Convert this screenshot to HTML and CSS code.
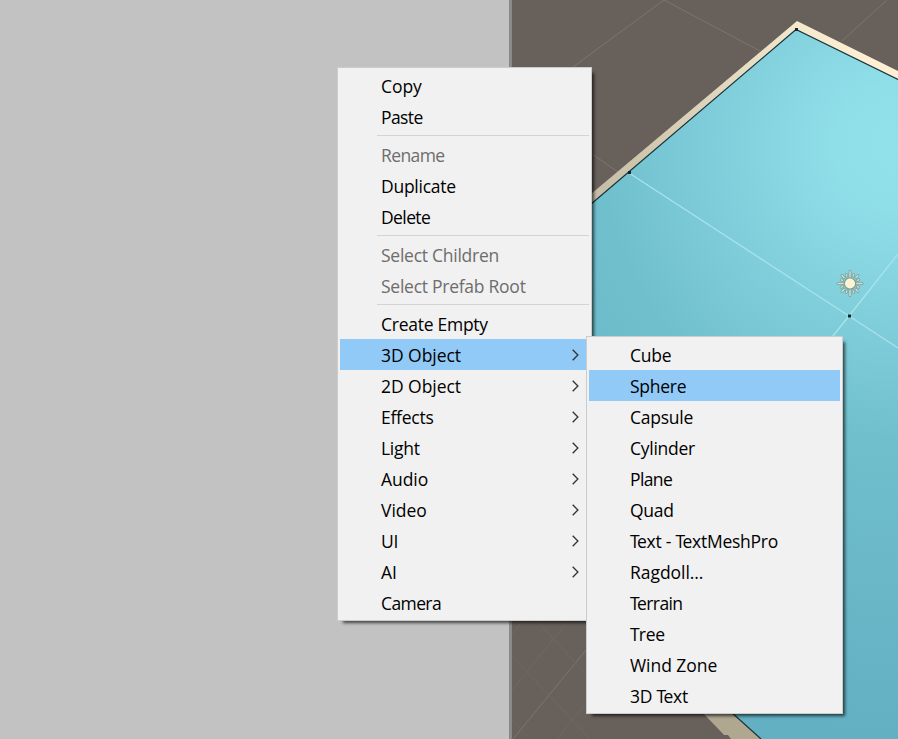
FILE: index.html
```
<!DOCTYPE html>
<html lang="en">
<head>
<meta charset="utf-8">
<title>Scene</title>
<link rel="stylesheet" href="styles.css">
</head>
<body>
<main class="editor">
  <section class="hierarchy"></section>
  <section class="scene">
    <svg class="viewport" viewBox="512 0 386 739" width="386" height="739">
      <defs>
        <radialGradient id="water" gradientUnits="userSpaceOnUse" cx="895" cy="145" r="590">
          <stop offset="0" stop-color="#91e1eb"/>
          <stop offset=".1" stop-color="#8fdfe9"/>
          <stop offset=".25" stop-color="#84d2de"/>
          <stop offset=".5" stop-color="#70bfcd"/>
          <stop offset="1" stop-color="#62b0c2"/>
        </radialGradient>
        <linearGradient id="rim" gradientUnits="userSpaceOnUse" x1="592" y1="200" x2="870" y2="55">
          <stop offset="0" stop-color="#c5bca5"/>
          <stop offset=".7" stop-color="#eae0c6"/>
          <stop offset="1" stop-color="#fff0d5"/>
        </linearGradient>
      </defs>
      <g class="grid">
        <path d="M573 67L664 0L760 51M842 41L887 0M592 154L618 172"/>
        <path d="M513 739L587 649"/>
        <path class="faint" d="M512 634L523 621M512 690L569 620M557 739L587 702M536 620L587 675M512 656L590 739M512 720L530 739"/>
      </g>
      <path fill="url(#rim)" d="M560 220L797 21L898 71V90L796 30L570 222Z"/>
      <path fill="#b0a791" d="M690 700L704 714L724 735H728L731 739H765L720 700Z"/>
      <path fill="url(#water)" d="M570 222L796 29.500L898 79.500V739H761L570 560Z"/>
      <path class="edge" d="M570 222L796 29.500L898 79.500M720 702L761 739"/>
      <path class="waterline" d="M629 173L849 316L898 348M898 254L849 316L820 352"/>
      <path fill="#10252b" d="M628 171h3v3h-3zM795 28h3v3h-3zM848 314.500h3v3h-3z"/>
      <g class="sun" transform="translate(850 283.500)">
        <path class="halo" d="M0-12V12M-12 0H12M-6-6L-8-8M6-6L8-8M6 6L8 8M-6 6L-8 8M-3.200-7.500L-3.700-8.800M3.200-7.500L3.700-8.800M7.500-3.200L8.800-3.700M-7.500-3.200L-8.800-3.700M7.500 3.200L8.800 3.700M-7.500 3.200L-8.800 3.700M-3.200 7.500L-3.700 8.800M3.200 7.500L3.700 8.800"/>
        <path class="rays" d="M0-12V12M-12 0H12M-6-6L-8-8M6-6L8-8M6 6L8 8M-6 6L-8 8M-3.200-7.500L-3.700-8.800M3.200-7.500L3.700-8.800M7.500-3.200L8.800-3.700M-7.500-3.200L-8.800-3.700M7.500 3.200L8.800 3.700M-7.500 3.200L-8.800 3.700M-3.200 7.500L-3.700 8.800M3.200 7.500L3.700 8.800"/>
        <circle r="5.700" fill="#fff3d6" stroke="#7f9f98" stroke-width="1.300"/>
      </g>
    </svg>
  </section>
</main>
<ul class="menu context">
  <li class="wide">Copy</li>
  <li class="narrow">Paste</li>
  <li class="separator"></li>
  <li class="disabled narrow">Rename</li>
  <li>Duplicate</li>
  <li class="narrow">Delete</li>
  <li class="separator"></li>
  <li class="disabled">Select Children</li>
  <li class="disabled">Select Prefab Root</li>
  <li class="separator"></li>
  <li>Create Empty</li>
  <li class="selected wide">3D Object<svg class="arrow" viewBox="0 0 7 12"><path d="M.7.700L5.900 6L.7 11.300"/></svg></li>
  <li class="wide">2D Object<svg class="arrow" viewBox="0 0 7 12"><path d="M.7.700L5.900 6L.7 11.300"/></svg></li>
  <li>Effects<svg class="arrow" viewBox="0 0 7 12"><path d="M.7.700L5.900 6L.7 11.300"/></svg></li>
  <li>Light<svg class="arrow" viewBox="0 0 7 12"><path d="M.7.700L5.900 6L.7 11.300"/></svg></li>
  <li class="wide">Audio<svg class="arrow" viewBox="0 0 7 12"><path d="M.7.700L5.900 6L.7 11.300"/></svg></li>
  <li class="wide">Video<svg class="arrow" viewBox="0 0 7 12"><path d="M.7.700L5.900 6L.7 11.300"/></svg></li>
  <li>UI<svg class="arrow" viewBox="0 0 7 12"><path d="M.7.700L5.900 6L.7 11.300"/></svg></li>
  <li class="wide">AI<svg class="arrow" viewBox="0 0 7 12"><path d="M.7.700L5.900 6L.7 11.300"/></svg></li>
  <li class="narrow">Camera</li>
</ul>
<ul class="menu submenu">
  <li>Cube</li>
  <li class="selected">Sphere</li>
  <li>Capsule</li>
  <li>Cylinder</li>
  <li class="narrow">Plane</li>
  <li>Quad</li>
  <li><span><span class="kern">T</span>ext - <span class="kern">T</span>extMeshPro</span></li>
  <li class="wide">Ragdoll...</li>
  <li class="narrow"><span><span class="kern">T</span>errain</span></li>
  <li><span><span class="kern-light">T</span>ree</span></li>
  <li class="wide">Wind Zone</li>
  <li><span>3D <span class="kern">T</span>ext</span></li>
</ul>
</body>
</html>
```
FILE: styles.css
```
* { box-sizing: border-box; }
body {
  margin: 0;
  width: 898px;
  height: 739px;
  position: relative;
  overflow: hidden;
  font-family: "Open Sans", "Noto Sans", sans-serif;
}
.editor { display: flex; height: 739px; }
.hierarchy {
  width: 512px;
  flex: none;
  background: #c2c2c2;
  border-right: 3px solid #8a8a8a;
}
.scene { flex: 1; background: #68605b; }
.viewport { display: block; }
.grid path { fill: none; stroke: #7b7571; stroke-width: 1; }
.grid .faint { stroke: #6e6863; }
.edge { fill: none; stroke: #17343c; stroke-width: 1.2; }
.waterline { fill: none; stroke: #a9e3ec; stroke-width: 1.3; }
.sun path { fill: none; stroke-linecap: round; }
.sun .halo { stroke: #6fa3a6; stroke-width: 3; }
.sun .rays { stroke: #e0dcc4; stroke-width: 1.4; }
.menu {
  position: absolute;
  margin: 0;
  padding: 2px;
  list-style: none;
  background: #f1f1f1;
  border: 1px solid #cccccc;
  box-shadow: 4px 4px 3px -2px rgba(0, 0, 0, .65);
}
.context { left: 337px; top: 67px; width: 255px; }
.submenu { left: 586px; top: 336px; width: 257px; }
.menu li {
  display: flex;
  align-items: center;
  justify-content: space-between;
  height: 31px;
  padding: 1px 10px 0 41px;
  font-size: 17.5px;
  line-height: 30px;
  letter-spacing: -.26px;
  color: #000;
  white-space: pre;
}
.menu .wide { letter-spacing: -.05px; }
.menu .narrow { letter-spacing: -.6px; }
.menu .kern { letter-spacing: -2.6px; }
.menu .kern-light { letter-spacing: -.8px; }
.menu .disabled { color: #6d6d6d; }
.menu .selected { background: #91c9f7; }
.menu .separator {
  height: 7px;
  margin: 0 0 0 37px;
  padding: 0;
  background: linear-gradient(#d4d4d4, #d4d4d4) 0 3px / 100% 1px no-repeat;
}
.arrow { width: 7px; height: 12px; margin-top: -1px; fill: none; stroke: #333; stroke-width: 1.3; }
```
